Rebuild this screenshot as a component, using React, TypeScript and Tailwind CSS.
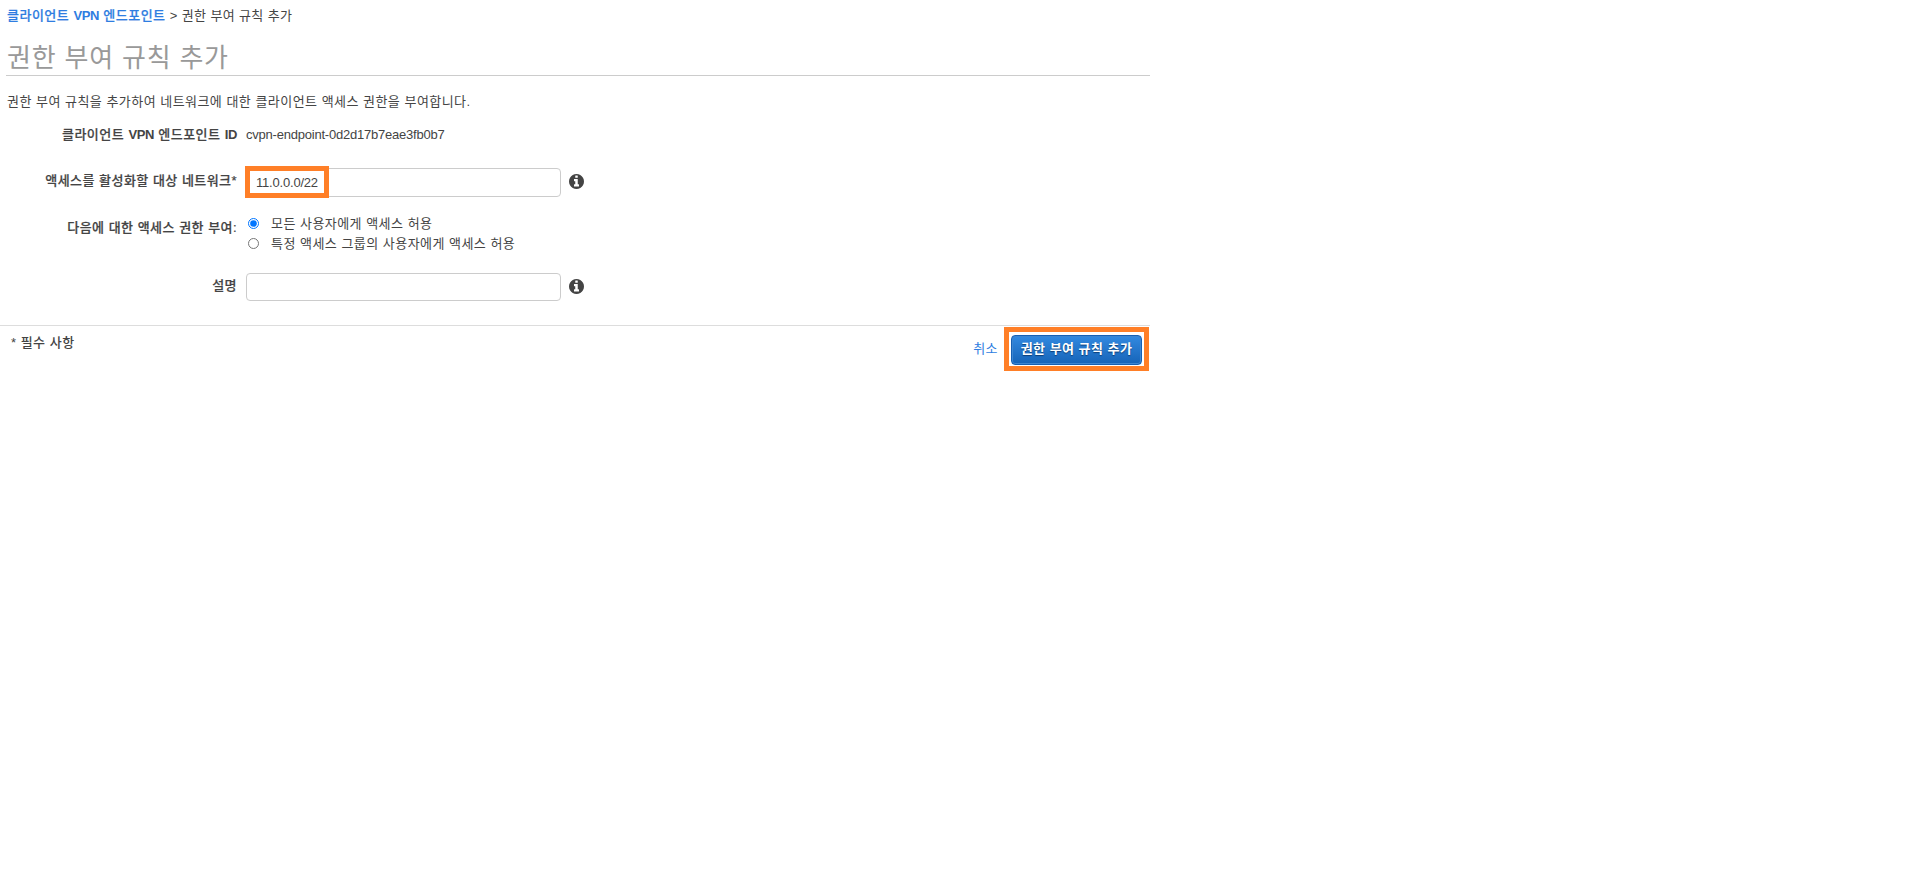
import { useState, type ReactNode } from "react";

const accessOptions = [
  { value: "all", label: "모든 사용자에게 액세스 허용" },
  { value: "group", label: "특정 액세스 그룹의 사용자에게 액세스 허용" }
];

type FieldRowProps = {
  label: ReactNode;
  className: string;
  labelClassName?: string;
  children: ReactNode;
};

function FieldRow({ label, className, labelClassName = "", children }: FieldRowProps) {
  return (
    <div className={`flex ${className}`}>
      <div className={`w-[237px] shrink-0 text-right font-medium [-webkit-text-stroke:0.2px] ${labelClassName}`}>{label}</div>
      {children}
    </div>
  );
}

function Latin({ children }: { children: ReactNode }) {
  return <span className="font-bold tracking-[-0.4px] [-webkit-text-stroke:0]">{children}</span>;
}

function InfoIcon() {
  return (
    <svg viewBox="0 128 1536 1536" fill="currentColor" className="mt-[6px] ml-[8.3px] size-[15px]">
      <path d="M1024 1376v-160q0-14-9-23t-23-9h-96v-512q0-14-9-23t-23-9h-320q-14 0-23 9t-9 23v160q0 14 9 23t23 9h96v320h-96q-14 0-23 9t-9 23v160q0 14 9 23t23 9h448q14 0 23-9t9-23zm-128-896v-160q0-14-9-23t-23-9h-192q-14 0-23 9t-9 23v160q0 14 9 23t23 9h192q14 0 23-9t9-23zm640 416q0 209-103 385.5t-279.5 279.5-385.5 103-385.5-103-279.5-279.5-103-385.5 103-385.5 279.5-279.5 385.5-103 385.5 103 279.5 279.5 103 385.5z" />
    </svg>
  );
}

export default function App() {
  const [network, setNetwork] = useState("11.0.0.0/22");
  const [description, setDescription] = useState("");
  const [access, setAccess] = useState("all");

  const inputClass =
    "block w-[315px] rounded-[4px] border border-[#ccc] bg-white px-[9px] text-[13px] tracking-[-0.2px] text-[#444] outline-none";

  return (
    <main className="w-[1150px] font-['Liberation_Sans','Noto_Sans_CJK_KR',sans-serif] text-[13px] leading-5 tracking-[0.43px] text-[#444] [word-spacing:0.2px]">
      <nav className="h-[34px] whitespace-nowrap pt-[6px] pl-[7px]">
        <a href="#" className="font-medium tracking-[0.48px] text-[#2e7de1] [-webkit-text-stroke:0.2px]">
          클라이언트 <Latin>VPN</Latin> 엔드포인트
        </a>
        <span className="tracking-[0.32px]"> &gt; 권한 부여 규칙 추가</span>
      </nav>

      <h1 className="ml-[6px] h-[42px] border-b border-[#ccc] pl-px text-[26px] leading-[48px] font-normal tracking-[0.8px] text-[#999] [word-spacing:0px]">
        권한 부여 규칙 추가
      </h1>
      <p className="mt-4 ml-[7px]">권한 부여 규칙을 추가하여 네트워크에 대한 클라이언트 액세스 권한을 부여합니다.</p>

      <FieldRow
        label={<>클라이언트 <Latin>VPN</Latin> 엔드포인트 <Latin>ID</Latin></>}
        className="mt-3"
        labelClassName="pt-px -mb-px tracking-[0.48px]"
      >
        <div className="mt-px -mb-px ml-[9px] tracking-[-0.22px]">cvpn-endpoint-0d2d17b7eae3fb0b7</div>
      </FieldRow>

      <FieldRow label="액세스를 활성화할 대상 네트워크*" className="mt-6" labelClassName="pt-[3px]">
        <div className="relative ml-[9px]">
          <input
            className={`${inputClass} h-[29px]`}
            value={network}
            onChange={(e) => setNetwork(e.target.value)}
          />
          <div className="pointer-events-none absolute -top-[2px] -left-px h-8 w-[84px] border-[5px] border-[#ff7f27]" />
        </div>
        <InfoIcon />
      </FieldRow>

      <FieldRow label="다음에 대한 액세스 권한 부여:" className="mt-[17px]" labelClassName="pt-1">
        <div className="ml-[10px]">
          {accessOptions.map((option) => (
            <label key={option.value} className="flex h-5 items-center">
              <input
                type="radio"
                name="access"
                className="mr-3 mb-px ml-px size-[11px]"
                checked={access === option.value}
                onChange={() => setAccess(option.value)}
              />
              {option.label}
            </label>
          ))}
        </div>
      </FieldRow>

      <FieldRow label="설명" className="mt-[19px]" labelClassName="pt-[3px]">
        <input
          className={`${inputClass} ml-[9px] h-7`}
          value={description}
          onChange={(e) => setDescription(e.target.value)}
        />
        <InfoIcon />
      </FieldRow>

      <footer className="mt-6 flex items-start justify-between border-t border-[#ddd]">
        <div className="pt-[7px] pl-[11px] font-medium">* 필수 사항</div>
        <div className="flex items-center pt-px pr-px">
          <a href="#" className="mr-[6px] text-[#2e7de1]">취소</a>
          <div className="border-[5px] border-[#ff7f27] px-[2px] pt-[3px] pb-px">
            <button className="block h-[30px] w-[131px] rounded-[4px] border border-[#1660b4] bg-linear-to-b from-[#3289e0] to-[#1664b8] pb-[2px] font-bold tracking-[0.4px] text-white inset-shadow-[0_0_0_1px_#3c85d0] text-shadow-[0_1px_1px_#0d3d75] [word-spacing:0.2px]">
              권한 부여 규칙 추가
            </button>
          </div>
        </div>
      </footer>
    </main>
  );
}
